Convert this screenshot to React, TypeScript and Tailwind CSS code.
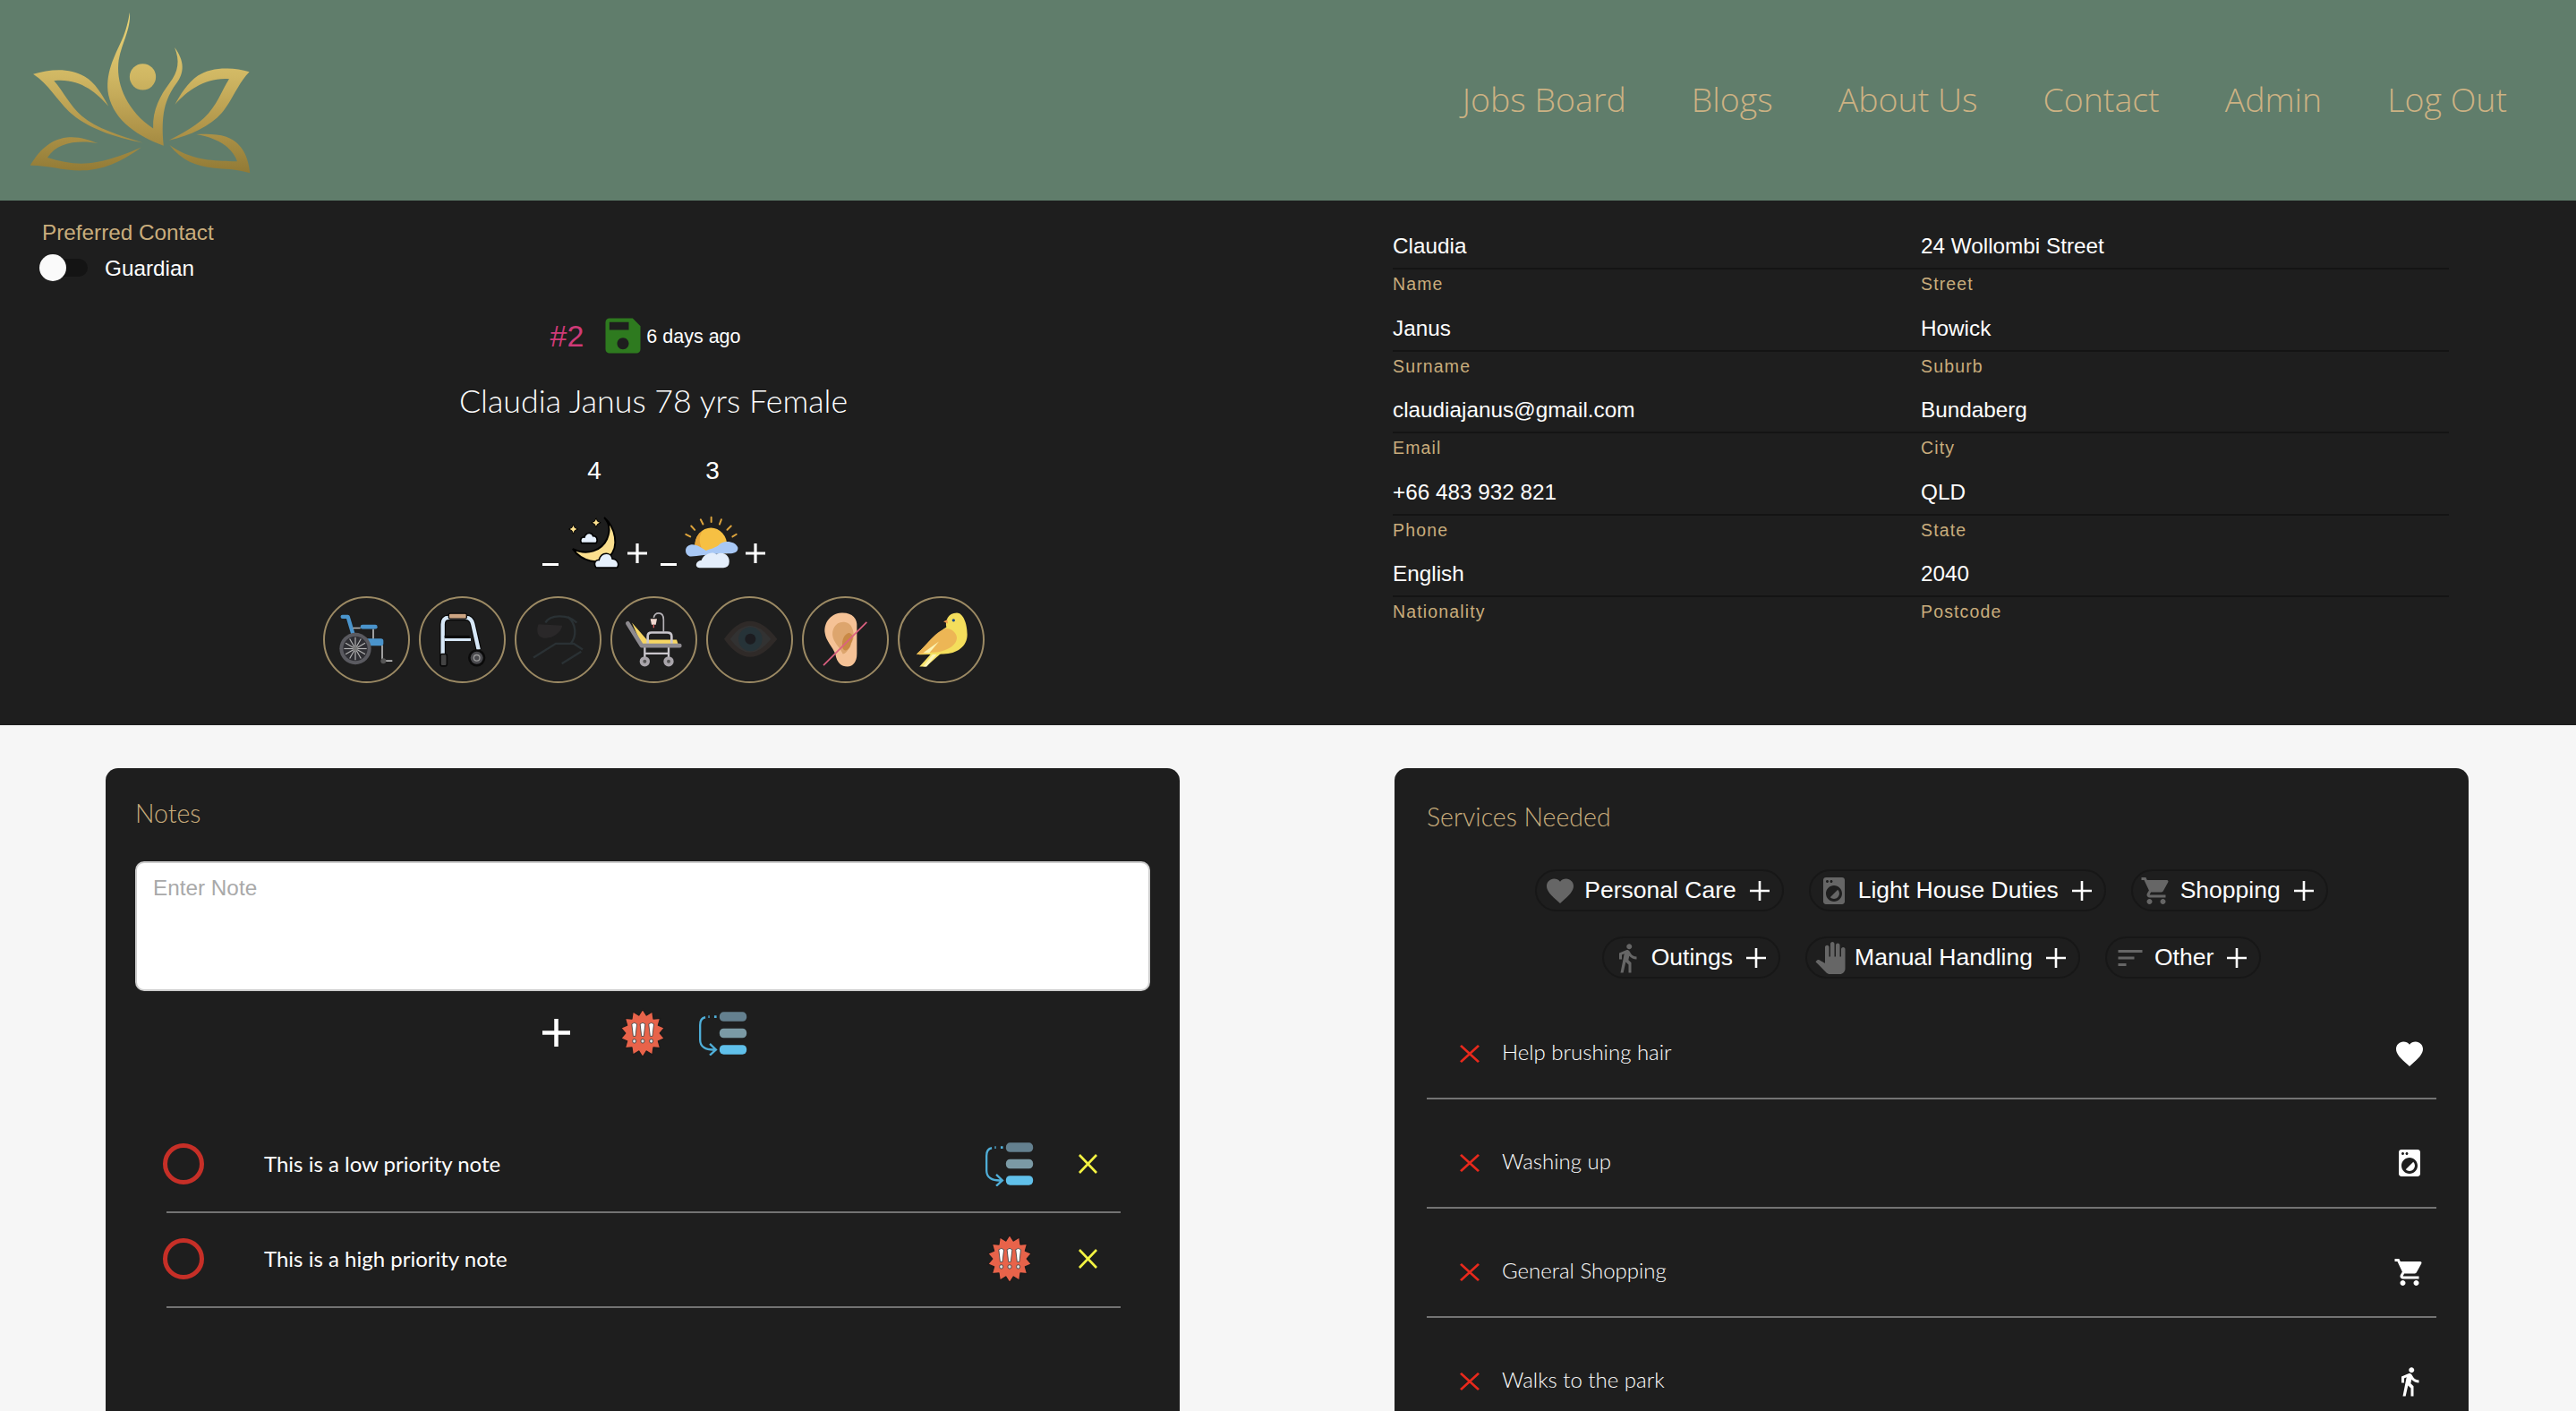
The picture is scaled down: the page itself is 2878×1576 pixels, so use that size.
import type { ReactNode } from "react";
import {
  MdDirectionsWalk,
  MdFavorite,
  MdLocalLaundryService,
  MdPanTool,
  MdSave,
  MdShoppingCart,
  MdSort,
} from "react-icons/md";

const navLinks = ["Jobs Board", "Blogs", "About Us", "Contact", "Admin", "Log Out"];

const fields = [
  ["Claudia", "Name", "24 Wollombi Street", "Street"],
  ["Janus", "Surname", "Howick", "Suburb"],
  ["claudiajanus@gmail.com", "Email", "Bundaberg", "City"],
  ["+66 483 932 821", "Phone", "QLD", "State"],
  ["English", "Nationality", "2040", "Postcode"],
];

const Logo = () => (
  <svg viewBox="100 40 742 544" className="mt-[13px] h-[181px] w-[247px] shrink-0 self-start">
    <defs>
      <linearGradient id="gold" gradientUnits="userSpaceOnUse" x1="0" y1="40" x2="0" y2="582">
        <stop offset="0" stopColor="#ecd678" />
        <stop offset="0.4" stopColor="#d0b763" />
        <stop offset="0.7" stopColor="#b2974b" />
        <stop offset="1" stopColor="#917a35" />
      </linearGradient>
    </defs>
    <g fill="url(#gold)">
      <path d="M112 250C170 232 235 228 285 258C320 278 345 320 365 358C325 310 265 262 182 272C215 310 235 355 275 390C325 432 400 455 480 480C385 462 290 430 232 375C190 335 165 285 112 250Z" />
      <path d="M838 242C780 225 710 225 665 255C630 280 605 320 588 352C630 305 690 260 770 266C745 305 730 355 685 398C650 430 610 450 568 472C640 455 705 425 745 380C780 340 800 280 838 242Z" />
      <path d="M102 556C130 510 165 470 225 462C265 458 300 470 330 482C270 472 195 475 160 530C215 548 270 556 325 545C380 534 430 515 475 495C420 535 360 570 280 573C215 575 160 555 102 556Z" />
      <path d="M840 582C835 530 815 480 760 460C730 450 695 450 660 452C720 462 780 490 797 543C730 540 650 545 570 488C610 540 660 560 720 565C765 568 805 572 840 582Z" />
      <path d="M436 42C442 100 405 150 398 215C392 290 430 375 515 432C512 370 540 320 570 280C600 240 605 205 587 160C620 205 622 245 590 285C555 335 540 385 550 490C470 460 385 410 365 320C352 250 385 190 410 135C425 100 432 70 436 42Z" />
      <circle cx="480" cy="259" r="44" />
    </g>
  </svg>
);

const Plus = ({ size = 22, width = 3 }: { size?: number; width?: number }) => (
  <svg width={size} height={size} viewBox="0 0 22 22" className="shrink-0">
    <path d="M11 0V22M0 11H22" stroke="#fff" strokeWidth={(width * 22) / size} />
  </svg>
);

const Cross = ({ color, className }: { color: string; className: string }) => (
  <svg viewBox="0 0 22 22" className={className} preserveAspectRatio="none">
    <path d="M1 1L21 21M21 1L1 21" stroke={color} strokeWidth="2.8" fill="none" />
  </svg>
);

const Moon = () => (
  <svg viewBox="222 45 178 183" className="h-[61px] w-[58px] shrink-0">
    <path d="M348 52C385 85 402 150 365 187C330 218 270 202 240 160C290 185 340 165 358 125C370 95 365 70 348 52Z" fill="#fbdf8e" stroke="#000" strokeWidth="6" />
    <path d="M242 76L247 87L258 92L247 97L242 108L237 97L226 92L237 87Z" fill="#fbdf8e" stroke="#000" strokeWidth="3" />
    <path d="M320 54L325 65L336 70L325 75L320 86L315 75L304 70L315 65Z" fill="#fbdf8e" stroke="#000" strokeWidth="3" />
    <path d="M270 140C262 126 272 118 280 120C286 102 306 102 310 116C322 114 328 130 320 140Z" fill="#e6f0fc" stroke="#000" strokeWidth="5" />
    <path d="M320 224C310 210 318 196 330 198C338 168 372 170 376 194C392 194 402 212 392 224Z" fill="#e6f0fc" stroke="#000" strokeWidth="5" />
  </svg>
);

const Sun = () => (
  <svg viewBox="615 48 185 180" className="mt-[1px] h-[60px] w-[61px] shrink-0">
    <path d="M708 52V68M672 60L680 76M742 60L736 76M640 82L652 95M775 82L762 95M622 110L637 118M793 110L780 118" stroke="#dca33c" strokeWidth="6" strokeLinecap="round" />
    <path d="M652 150A55 62 0 0 1 762 150L762 175H652Z" fill="#f6c043" />
    <path d="M652 150A55 62 0 0 1 680 96C665 115 665 140 680 165L652 165Z" fill="#e8a63a" />
    <path d="M640 185C618 185 612 150 640 145C655 142 675 155 690 165C705 160 725 155 735 145C745 130 790 130 798 155C800 170 785 175 770 175C730 175 690 180 640 185Z" fill="#a8c8f5" />
    <path d="M668 224C650 222 655 200 675 198C680 178 712 165 725 178C750 165 775 185 768 210C766 220 755 224 745 224Z" fill="#e4eefb" />
  </svg>
);

const spikes = Array.from({ length: 28 }, (_, i) => {
  const a = (i * Math.PI) / 14 - Math.PI / 2;
  const r = i % 2 === 0 ? 78 : 60;
  return `${(413 + r * Math.cos(a)).toFixed(1)},${(132 + r * Math.sin(a)).toFixed(1)}`;
}).join(" ");

const HighPriority = ({ className }: { className: string }) => (
  <svg viewBox="332 50 162 164" className={className} preserveAspectRatio="none">
    <polygon points={spikes} fill="#e8634a" stroke="#1b1b1b" strokeWidth="4" strokeLinejoin="round" />
    {[384, 413, 443].map((x) => (
      <g key={x} fill="#fff" stroke="#3a3a3a" strokeWidth="2.5">
        <path d={`M${x - 9} 102Q${x} 94 ${x + 9} 102L${x + 4} 142H${x - 4}Z`} />
        <circle cx={x} cy="158" r="6.5" fill="#ddd" />
      </g>
    ))}
  </svg>
);

const LowPriority = ({ className }: { className: string }) => (
  <svg viewBox="598 56 166 152" className={className}>
    <rect x="670" y="60" width="92" height="32" rx="14" fill="#64808f" />
    <rect x="670" y="116" width="92" height="32" rx="14" fill="#7b9aa5" />
    <rect x="670" y="172" width="92" height="32" rx="14" fill="#60c0ea" />
    <path d="M622 78C607 80 604 90 604 105V155C604 178 622 190 655 188M637 168L658 188L637 207" fill="none" stroke="#4faed8" strokeWidth="7" />
    <path d="M632 76H636M652 76H660" stroke="#4faed8" strokeWidth="8" />
  </svg>
);

const Wheelchair = () => (
  <svg viewBox="30 48 291 288" className="size-[97px] shrink-0">
    <path d="M95 115H113L130 172" stroke="#4a94cc" strokeWidth="13" strokeLinecap="round" strokeLinejoin="round" fill="none" />
    <path d="M130 153H155M198 156V190M228 210V262M228 263H262" stroke="#b9b9b9" strokeWidth="5" />
    <rect x="155" y="142" width="57" height="14" rx="7" fill="#4a94cc" />
    <rect x="130" y="188" width="102" height="24" rx="8" fill="#4a94cc" />
    <circle cx="232" cy="263" r="9" fill="#555" />
    <circle cx="138" cy="222" r="53" fill="#5a5a60" />
    <circle cx="138" cy="222" r="41" fill="#2e2e33" />
    {[0, 30, 60, 90, 120, 150].map((d) => (
      <path key={d} d="M138 184V260" stroke="#b5b5b5" strokeWidth="3.5" transform={`rotate(${d} 138 222)`} />
    ))}
    <circle cx="138" cy="222" r="8" fill="#777" />
  </svg>
);

const Walker = () => (
  <svg viewBox="352 48 291 288" className="size-[97px] shrink-0">
    <path d="M432 262V140Q432 118 452 118H510Q528 118 533 140L552 225" fill="none" stroke="#0a0a0a" strokeWidth="20" />
    <path d="M432 262V140Q432 118 452 118H510Q528 118 533 140L552 225" fill="none" stroke="#d7e8f8" strokeWidth="13" />
    <path d="M438 182H522" stroke="#0a0a0a" strokeWidth="8" />
    <path d="M438 192H526" stroke="#d7e8f8" strokeWidth="9" />
    <rect x="452" y="104" width="60" height="18" rx="5" fill="#cda583" stroke="#0a0a0a" strokeWidth="4" />
    <rect x="424" y="240" width="22" height="40" rx="6" fill="#444" stroke="#0a0a0a" strokeWidth="5" />
    <circle cx="546" cy="253" r="29" fill="#0a0a0a" />
    <circle cx="546" cy="253" r="21" fill="#4a4a4e" />
    <circle cx="546" cy="253" r="10" fill="none" stroke="#999" strokeWidth="4" />
  </svg>
);

const Hoist = () => (
  <svg viewBox="672 48 291 288" className="size-[97px] shrink-0">
    <path d="M775 135C790 108 850 105 880 135M850 115C880 140 880 180 860 205M735 252L810 205H870L900 225M830 272L895 232" fill="none" stroke="#2a3134" strokeWidth="7" />
    <path d="M752 140L832 145C825 175 790 192 765 185C745 180 745 155 752 140Z" fill="#2a2829" />
  </svg>
);

const Stretcher = () => (
  <svg viewBox="0 48 291 288" className="size-[97px] shrink-0">
    <path d="M145 118Q148 103 162 103Q178 103 178 125V165" fill="none" stroke="#b4b1b6" strokeWidth="5" />
    <path d="M134 122H156L152 142H138Z" fill="#f0d8d0" />
    <path d="M145 142V152" stroke="#d95a5a" strokeWidth="4" />
    <path d="M72 135L122 192H222L228 210H105Z" fill="#f6d663" />
    <path d="M125 205V180Q125 168 138 168H190Q205 168 205 180V205" fill="none" stroke="#c9c6cc" strokeWidth="8" />
    <path d="M58 137L105 212H232" fill="none" stroke="#8d8a8f" strokeWidth="14" strokeLinecap="round" strokeLinejoin="round" />
    <path d="M115 218V262M195 218V262M115 238H195" stroke="#c9c6cc" strokeWidth="7" />
    {[115, 195].map((x) => (
      <g key={x}>
        <circle cx={x} cy="265" r="17" fill="#a9a5ab" />
        <circle cx={x} cy="265" r="6" fill="#555" />
      </g>
    ))}
  </svg>
);

const Eye = () => (
  <svg viewBox="145 48 291 288" className="size-[97px] shrink-0">
    <path d="M205 190Q290 70 383 190Q290 310 205 190Z" fill="#2f2a28" />
    <path d="M225 190Q290 100 362 190Q290 280 225 190Z" fill="#323232" />
    <circle cx="293" cy="190" r="40" fill="#263338" />
    <circle cx="293" cy="190" r="18" fill="#1c1c20" />
  </svg>
);

const Ear = () => (
  <svg viewBox="468 48 291 288" className="size-[97px] shrink-0">
    <path d="M600 102C560 105 540 140 545 170C548 195 570 215 580 240C585 270 600 282 620 282C640 282 652 265 652 240V150C655 120 635 100 600 102Z" fill="#f5c296" />
    <path d="M610 133C580 130 565 160 572 185C578 205 600 225 605 240C620 240 630 210 640 190C645 165 635 135 610 133Z" fill="#dda56d" />
    <path d="M622 170C640 168 642 190 632 205C630 225 612 235 605 222C600 200 605 178 622 170Z" fill="#c98945" />
    <path d="M540 278L685 133" stroke="#dd6080" strokeWidth="5" />
  </svg>
);

const Bird = () => (
  <svg viewBox="787 48 291 288" className="size-[97px] shrink-0">
    <path d="M860 282L900 238H932L882 282Z" fill="#f8e46c" />
    <path d="M872 282L905 240H918L884 282Z" fill="#fcf4b5" />
    <path d="M985 102C1005 102 1020 135 1020 175C1020 215 985 240 940 240L860 242L850 240C900 195 925 165 950 150C945 130 955 102 985 102Z" fill="#f4de5c" />
    <path d="M945 155C965 150 985 170 985 185C985 215 940 235 900 235L850 242C890 200 915 165 945 155Z" fill="#edb655" />
    <path d="M925 198L893 236H872Z" fill="#fcf4b5" />
    <path d="M953 125L940 131L955 138Z" fill="#ef9a4d" />
    <circle cx="974" cy="127" r="5" fill="#1f4d86" />
  </svg>
);

const aids = [Wheelchair, Walker, Hoist, Stretcher, Eye, Ear, Bird];

const Chip = ({ icon, label }: { icon: ReactNode; label: string }) => (
  <div className="flex h-[47px] items-center gap-[9px] rounded-full border-2 border-[#171717] pl-[8px] pr-[14px] text-[26.5px] text-white">
    <span className="flex size-[36px] items-center justify-center text-[#666]">{icon}</span>
    <span className="mr-[6px]">{label}</span>
    <Plus size={22} width={2.6} />
  </div>
);

const services = [
  { label: "Help brushing hair", icon: <MdFavorite size={36} /> },
  { label: "Washing up", icon: <MdLocalLaundryService size={36} /> },
  { label: "General Shopping", icon: <MdShoppingCart size={36} /> },
  { label: "Walks to the park", icon: <MdDirectionsWalk size={36} /> },
];

const NoteRow = ({ text, icon }: { text: string; icon: ReactNode }) => (
  <div className="flex h-[106px] items-center border-b-2 border-[#737373] pb-[2px]">
    <div className="-ml-[4px] mr-[67px] size-[46px] shrink-0 rounded-full border-[5px] border-[#c62f27]" />
    <span className="flex-1 font-['Lato'] text-[24px] text-white">{text}</span>
    <span className="mr-[50px] flex w-[55px] justify-center">{icon}</span>
    <Cross color="#f4f342" className="mr-[26px] h-[22px] w-[21px]" />
  </div>
);

export default function App() {
  return (
    <div className="h-screen overflow-hidden bg-[#f6f6f6] font-['Liberation_Sans',sans-serif]">
      <header className="flex h-[224px] items-center justify-between bg-[#607d6b] pl-[33px] pr-[77px]">
        <Logo />
        <nav className="-mt-[2px] flex gap-[73px] font-['Open_Sans'] text-[37.5px] font-light text-[#cdb283]">
          {navLinks.map((l) => (
            <a key={l}>{l}</a>
          ))}
        </nav>
      </header>

      <section className="flex h-[586px] bg-[#1e1e1e]">
        <div className="flex w-[1460px] flex-col items-center pt-[22px]">
          <div className="self-start pl-[47px]">
            <div className="text-[24.3px] leading-[28px] text-[#c9ad7c]">Preferred Contact</div>
            <div className="-ml-[3px] mt-[10px] flex h-[30px] items-center">
              <div className="relative h-[20px] w-[54px] rounded-full bg-[#141414]">
                <div className="absolute -top-[5px] left-0 size-[30px] rounded-full bg-[#fafafa]" />
              </div>
              <span className="ml-[19px] translate-y-[1px] text-[24.3px] text-white">Guardian</span>
            </div>
          </div>

          <div className="mt-[41px] flex h-[40px] items-center pr-[18px] text-white">
            <span className="mr-[18px] text-[34px] text-[#cf3a78]">#2</span>
            <MdSave size={52} color="#2e7a1f" className="shrink-0" />
            <span className="translate-y-[1px] text-[21.5px]">6 days ago</span>
          </div>

          <h1 className="mt-[31px] mb-[2px] h-[44px] font-['Lato'] text-[35.8px] font-light leading-[44px] text-white">
            Claudia Janus 78 yrs Female
          </h1>

          <div className="mt-[39px] flex h-[30px] text-[28px] leading-[30px] text-white">
            <span className="w-[132px] text-center">4</span>
            <span className="w-[132px] text-center">3</span>
          </div>

          <div className="mt-[34px] flex gap-[14px]">
            <div className="flex w-[118px] justify-between">
              <div className="ml-[1px] mt-[54px] h-[3px] w-[18px] bg-white" />
              <Moon />
              <div className="mt-[32px]">
                <Plus size={22} width={3.2} />
              </div>
            </div>
            <div className="flex w-[118px] justify-between">
              <div className="ml-[1px] mt-[54px] h-[3px] w-[18px] bg-white" />
              <Sun />
              <div className="mt-[32px]">
                <Plus size={22} width={3.2} />
              </div>
            </div>
          </div>

          <div className="mt-[30px] flex gap-[10px]">
            {aids.map((Aid, i) => (
              <div key={i} className="flex size-[97px] items-center justify-center rounded-full border-2 border-[#9c8a64]">
                <Aid />
              </div>
            ))}
          </div>
        </div>

        <div className="ml-[96px] w-[1180px] pt-[35px]">
          {fields.map(([v1, l1, v2, l2]) => (
            <div key={l1} className="grid h-[91.6px] grid-cols-[590px_590px]">
              {[
                [v1, l1],
                [v2, l2],
              ].map(([value, label]) => (
                <div key={label}>
                  <div className="h-[40px] text-[24.3px] leading-[32px] text-white">{value}</div>
                  <div className="border-t-2 border-[#141414] pt-[5px] text-[19.5px] leading-[22px] tracking-[1.15px] text-[#c9ad7c]">
                    {label}
                  </div>
                </div>
              ))}
            </div>
          ))}
        </div>
      </section>

      <section className="flex gap-[240px] pl-[118px] pt-[48px]">
        <div className="h-[1000px] w-[1200px] rounded-[14px] bg-[#1e1e1e] px-[33px] pt-[30px]">
          <h2 className="font-['Lato'] text-[28.5px] font-light leading-[40px] text-[#c9ad7c]">Notes</h2>
          <div className="mt-[34px] h-[145px] rounded-[10px] border-2 border-[#ccc] bg-white px-[18px] pt-[13px] text-[24.3px] leading-[30px] text-[#a9a9a9]">
            Enter Note
          </div>
          <div className="mt-[20px] flex h-[53px] items-center justify-center pl-[4px]">
            <Plus size={31} width={4.5} />
            <HighPriority className="ml-[55px] h-[56px] w-[52px]" />
            <LowPriority className="ml-[36px] h-[50px] w-[55px]" />
          </div>
          <div className="ml-[35px] mr-[33px] mt-[69px]">
            <NoteRow text="This is a low priority note" icon={<LowPriority className="h-[50px] w-[55px]" />} />
            <NoteRow text="This is a high priority note" icon={<HighPriority className="h-[56px] w-[52px]" />} />
          </div>
        </div>

        <div className="h-[1000px] w-[1200px] rounded-[14px] bg-[#1e1e1e] px-[36px] pt-[34px]">
          <h2 className="font-['Lato'] text-[28.5px] font-light leading-[40px] text-[#c9ad7c]">Services Needed</h2>
          <div className="mt-[39px] flex flex-col gap-[28px]">
            <div className="flex justify-center gap-[28px]">
              <Chip icon={<MdFavorite size={36} />} label="Personal Care" />
              <Chip icon={<MdLocalLaundryService size={36} />} label="Light House Duties" />
              <Chip icon={<MdShoppingCart size={36} />} label="Shopping" />
            </div>
            <div className="flex justify-center gap-[28px]">
              <Chip icon={<MdDirectionsWalk size={36} />} label="Outings" />
              <Chip icon={<MdPanTool size={36} />} label="Manual Handling" />
              <Chip icon={<MdSort size={36} />} label="Other" />
            </div>
          </div>
          <div className="mt-[13px]">
            {services.map((s) => (
              <div key={s.label} className="flex h-[122px] items-center border-b-2 border-[#737373] pl-[37px] pr-[10px] pt-[22px]">
                <Cross color="#e8291c" className="h-[20px] w-[22px] shrink-0" />
                <span className="ml-[25px] flex-1 -translate-y-[2px] font-['Lato'] text-[24px] font-light text-white">{s.label}</span>
                <span className="flex w-[40px] justify-center text-white">{s.icon}</span>
              </div>
            ))}
          </div>
        </div>
      </section>
    </div>
  );
}
